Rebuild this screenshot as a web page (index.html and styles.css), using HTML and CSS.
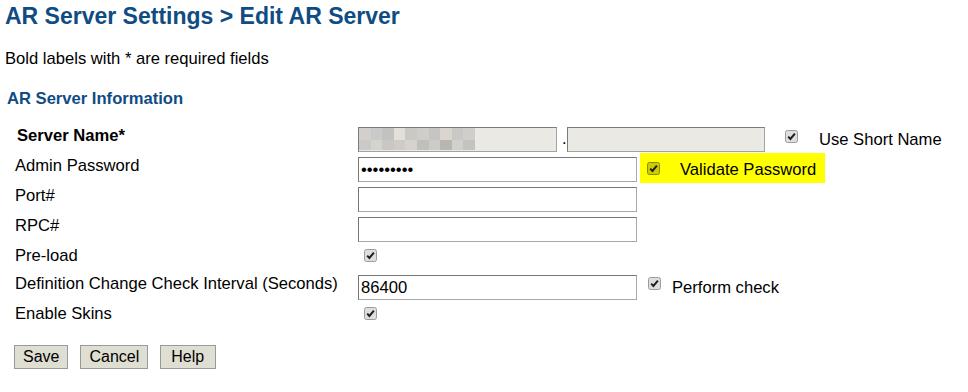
FILE: index.html
```html
<!DOCTYPE html>
<html lang="en">
<head>
  <meta charset="UTF-8" />
  <title>AR Server Settings - Edit AR Server</title>
  <link rel="stylesheet" href="styles.css">
</head>
<body>
  <div class="page">
    <h1>AR Server Settings &gt; Edit AR Server</h1>
    <p class="note">Bold labels with * are required fields</p>
    <h2>AR Server Information</h2>

    <form class="form">
      <div class="row">
        <label class="label required">Server Name*</label>
        <div class="field">
          <div class="box readonly wide">
            <span class="blur">
              <i style="background:#d3cfca"></i><i style="background:#cacaca"></i><i style="background:#c2c2c0"></i><i style="background:#e3e0da"></i><i style="background:#cbc9c4"></i><i style="background:#d1cdc8"></i><i style="background:#c6c5c3"></i><i style="background:#dbd5cf"></i><i style="background:#c9c8c6"></i><i style="background:#d0cecb"></i>
              <i style="background:#cbcac6"></i><i style="background:#d5d3ce"></i><i style="background:#c8c7c4"></i><i style="background:#cfccc7"></i><i style="background:#d6d3ce"></i><i style="background:#c0bfbc"></i><i style="background:#cdcbc7"></i><i style="background:#b7b6b3"></i><i style="background:#d2d0cb"></i><i style="background:#c4c3c0"></i>
            </span>
          </div>
          <span class="dot">.</span>
          <div class="box readonly domain"></div>
          <span class="cb short">
            <svg width="13" height="13" viewBox="0 0 13 13"><rect x="0.5" y="0.5" width="12" height="12" rx="2" fill="rgba(0,0,0,0.13)" stroke="#9c9c9c"/><path d="M3.2 6.6 L5.4 8.9 L9.9 3.6" fill="none" stroke="#1e1e1e" stroke-width="2"/></svg>
          </span>
          <span class="text short-text">Use Short Name</span>
        </div>
      </div>

      <div class="row">
        <label class="label">Admin Password</label>
        <div class="field">
          <input class="box" type="password" value="secretpwd">
          <span class="highlight">
            <span class="cb">
              <svg width="13" height="13" viewBox="0 0 13 13"><rect x="0.5" y="0.5" width="12" height="12" rx="2" fill="rgba(0,0,0,0.2)" stroke="#8a8a00"/><path d="M3.2 6.6 L5.4 8.9 L9.9 3.6" fill="none" stroke="#1e1e1e" stroke-width="2"/></svg>
            </span>
            <span class="text">Validate Password</span>
          </span>
        </div>
      </div>

      <div class="row">
        <label class="label">Port#</label>
        <div class="field"><input class="box" type="text"></div>
      </div>

      <div class="row">
        <label class="label">RPC#</label>
        <div class="field"><input class="box" type="text"></div>
      </div>

      <div class="row check-row">
        <label class="label">Pre-load</label>
        <div class="field">
          <span class="cb solo">
            <svg width="13" height="13" viewBox="0 0 13 13"><rect x="0.5" y="0.5" width="12" height="12" rx="2" fill="rgba(0,0,0,0.13)" stroke="#9c9c9c"/><path d="M3.2 6.6 L5.4 8.9 L9.9 3.6" fill="none" stroke="#1e1e1e" stroke-width="2"/></svg>
          </span>
        </div>
      </div>

      <div class="row">
        <label class="label">Definition Change Check Interval (Seconds)</label>
        <div class="field">
          <input class="box" type="text" value="86400">
          <span class="cb perform">
            <svg width="13" height="13" viewBox="0 0 13 13"><rect x="0.5" y="0.5" width="12" height="12" rx="2" fill="rgba(0,0,0,0.13)" stroke="#9c9c9c"/><path d="M3.2 6.6 L5.4 8.9 L9.9 3.6" fill="none" stroke="#1e1e1e" stroke-width="2"/></svg>
          </span>
          <span class="text">Perform check</span>
        </div>
      </div>

      <div class="row check-row">
        <label class="label">Enable Skins</label>
        <div class="field">
          <span class="cb solo">
            <svg width="13" height="13" viewBox="0 0 13 13"><rect x="0.5" y="0.5" width="12" height="12" rx="2" fill="rgba(0,0,0,0.13)" stroke="#9c9c9c"/><path d="M3.2 6.6 L5.4 8.9 L9.9 3.6" fill="none" stroke="#1e1e1e" stroke-width="2"/></svg>
          </span>
        </div>
      </div>

      <div class="buttons">
        <button type="button" class="save">Save</button>
        <button type="button" class="cancel">Cancel</button>
        <button type="button" class="help">Help</button>
      </div>
    </form>
  </div>
</body>
</html>
```

FILE: styles.css
```css
body {
  margin: 0;
  font-family: "Liberation Sans", Arial, sans-serif;
  background: #ffffff;
  color: #000000;
}

.page {
  padding: 3px 0 0 5px;
}

h1 {
  margin: 0;
  font-size: 23px;
  line-height: 26px;
  color: #0f4c84;
}

.note {
  margin: 20px 0 0;
  font-size: 16.6px;
  line-height: 19px;
}

h2 {
  margin: 21px 0 0 2px;
  font-size: 16.6px;
  line-height: 19px;
  color: #0f4c84;
}

.form {
  margin-top: 16px;
  padding-left: 10px;
  font-size: 16.6px;
}

.row {
  display: flex;
  height: 30px;
}

.check-row {
  height: 28px;
}

.label {
  width: 343px;
  padding-top: 1.5px;
  line-height: 19px;
}

.required {
  font-weight: bold;
  padding-left: 2px;
  width: 341px;
}

.field {
  display: flex;
  align-items: flex-start;
  padding-top: 3px;
}

.box {
  box-sizing: border-box;
  width: 279px;
  height: 25px;
  margin: 0;
  padding: 0 2px;
  border: 1px solid;
  border-color: #767676 #a9a9a9 #a9a9a9 #767676;
  background: #ffffff;
  font-family: "Liberation Sans", Arial, sans-serif;
  font-size: 16.6px;
  color: #000000;
  outline: none;
}

.readonly {
  background: #eae9e3;
  border-color: #7b7b7b #a3a3a3 #a3a3a3 #7b7b7b;
  padding: 0;
}

.wide {
  width: 199px;
}

.domain {
  width: 198px;
}

.blur {
  display: grid;
  grid-template-columns: repeat(10, 11.6px);
  grid-template-rows: 12px 10px;
}

.blur i {
  display: block;
}

.dot {
  width: 5px;
  padding-left: 5px;
  line-height: 24px;
}

.cb {
  display: inline-block;
  width: 13px;
  height: 13px;
  line-height: 0;
}

.short {
  margin: 3px 0 0 20px;
}

.text {
  line-height: 24px;
}

.short-text {
  margin: 0 0 0 21px;
  padding-top: 1px;
}

.highlight {
  display: flex;
  align-items: center;
  height: 30px;
  margin: -4px 0 0 3px;
  padding: 0 9px 0 7px;
  background: #ffff00;
}

.highlight .text {
  margin-left: 20px;
  padding-top: 3px;
}

.solo {
  margin: 2px 0 0 6px;
}

.perform {
  margin: 2px 0 0 11px;
}

.perform + .text {
  margin-left: 11px;
  padding-top: 1px;
}

.buttons {
  display: flex;
  gap: 12px;
  margin: 15px 0 0 -1px;
}

button {
  height: 24px;
  padding: 0 8px;
  border: 1px solid #9a9a9a;
  background: #dfded2;
  font-family: "Liberation Sans", Arial, sans-serif;
  font-size: 16px;
  color: #000000;
}

.help {
  padding: 0 11px 0 10px;
}
```
